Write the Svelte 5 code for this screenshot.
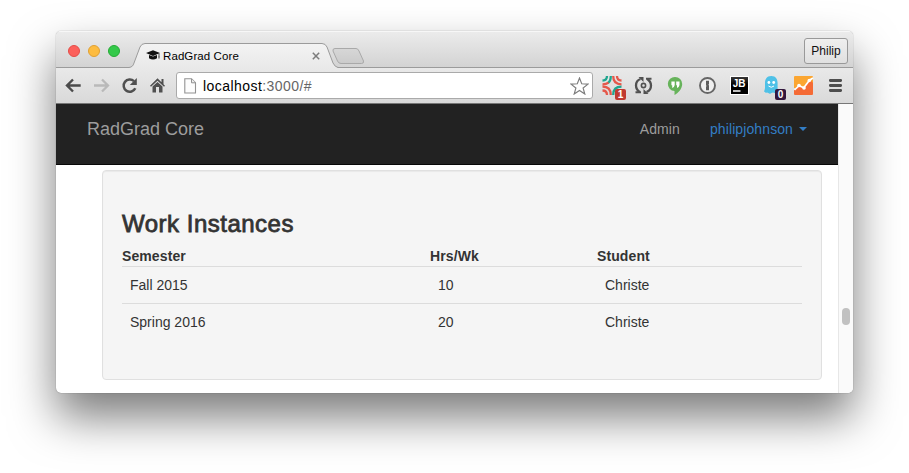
<script>
  const columns = ['Semester', 'Hrs/Wk', 'Student'];
  const rows = [
    ['Fall 2015', '10', 'Christe'],
    ['Spring 2016', '20', 'Christe']
  ];
</script>

<main class="desktop">
  <section class="window">
    <header class="titlebar">
      <div class="lights"><i class="red"></i><i class="amber"></i><i class="green"></i></div>
      <div class="tab">
        <svg class="shape" width="240" height="26" viewBox="0 0 240 26">
          <defs>
            <linearGradient id="tabfill" x2="0" y2="1"><stop stop-color="#f3f3f3" /><stop offset="1" stop-color="#e9e9e9" /></linearGradient>
            <linearGradient id="newfill" x2="0" y2="1"><stop stop-color="#d7d7d7" /><stop offset="1" stop-color="#cbcbcb" /></linearGradient>
          </defs>
          <path d="M0 25.5C3 25 4 24 5 21L11 5Q12.500 1.500 16 1.500H193Q196.500 1.500 198 5L204 21Q206 25 209 25.500V26H0Z" fill="url(#tabfill)" />
          <path d="M0 25.500C3 25 4 24 5 21L11 5Q12.500 1.500 16 1.500H193Q196.500 1.500 198 5L204 21Q206 25 209 25.500" fill="none" stroke="#9b9b9b" />
          <path d="M206 6.500H227Q229 6.500 230 9L234.500 19Q235 21.500 232.500 21.500H212Q209.500 21.500 208.500 19L204 9Q203.500 6.500 206 6.500Z" fill="url(#newfill)" stroke="#a9a9a9" />
        </svg>
        <svg class="cap" width="15" height="12" viewBox="0 0 15 12">
          <path d="M0 4 7 1.200 14 4 7 7ZM3 6 7 7.600 11 6V9.200Q7 11.800 3 9.200Z" fill="#111" />
          <path d="M13 4.500V8" stroke="#222" stroke-width=".8" /><path d="M12.400 7.500H13.600V9.500H12.400Z" fill="#555" />
        </svg>
        <span class="tabtitle">RadGrad Core</span>
        <svg class="close" width="8" height="8" viewBox="0 0 8 8"><path d="M.8 .8 7.200 7.200M7.200 .8 .8 7.200" stroke="#7c7c7c" stroke-width="1.500" /></svg>
      </div>
      <button class="profile">Philip</button>
    </header>

    <nav class="toolbar">
      <div class="controls">
        <svg width="28" height="35" viewBox="0 0 28 35"><path d="M20.700 17.500H7.500M13 11.500 7 17.500 13 23.500" fill="none" stroke="#4b4b4b" stroke-width="2.400" /></svg>
        <svg width="28" height="35" viewBox="0 0 28 35"><path d="M6 17.500H19.500M14 11.500 20 17.500 14 23.500" fill="none" stroke="#b9b9b9" stroke-width="2.300" /></svg>
        <svg width="28" height="35" viewBox="0 0 28 35"><path d="M19.300 20.200A6.100 6.100 0 1 1 18 13.200" fill="none" stroke="#505050" stroke-width="2.500" /><path d="M20.800 10V17H13.800Z" fill="#505050" /></svg>
        <svg width="28" height="35" viewBox="0 0 28 35"><path d="M6 17.800 13.500 10.200 17.500 14.200V11H19.500V16.200L21 17.800 20 18.800 13.500 12.800 7 18.800Z" fill="#505050" /><path d="M8.500 18.500 13.500 14 18.500 18.500V24.500H15V19H12V24.500H8.500Z" fill="#505050" /></svg>
      </div>
      <div class="address">
        <svg width="13" height="16" viewBox="0 0 13 16"><path d="M.8 .8H7.500L11.500 4.800V15H.8Z" fill="#fdfdfd" stroke="#929292" stroke-width="1.100" /><path d="M7.500 1V4.800H11.500" fill="#eee" stroke="#929292" /></svg>
        <span class="url">localhost<em>:3000/#</em></span>
        <svg class="star" width="19" height="18" viewBox="0 0 19 18"><path d="M9.500 1 11.700 6.800 18 7.100 13.100 11 14.800 17 9.500 13.500 4.200 17 5.900 11 1 7.100 7.300 6.800Z" fill="#fff" stroke="#7d7d7d" stroke-width="1.150" /></svg>
      </div>
      <div class="extensions">
        <div class="ext">
          <svg width="32" height="35" viewBox="0 0 32 35">
            <g fill="none" stroke-width="2.300">
              <path d="M11 8Q11 12.500 6.500 12.500M21 27Q21 22.500 25.500 22.500M17.200 27Q17.200 18.700 25.500 18.700M14.800 8Q14.800 13 12 15" stroke="#20a68f" />
              <path d="M12.500 14.600Q10.500 16.300 6.500 16.300M21 8Q21 12.500 25.500 12.500M17.200 8Q17.200 16.300 25.500 16.300M6.500 18.700Q14.800 18.700 14.800 27M6.500 22.500Q11 22.500 11 27" stroke="#e5584b" />
            </g>
          </svg><b class="badge tomato">1</b>
        </div>
        <svg width="32" height="35" viewBox="0 0 32 35"><g fill="none" stroke="#515151" stroke-width="2.300"><path d="M11.800 24Q8 21.500 8 17.500 8 12.500 12.500 11M19.200 11Q23 13.500 23 17.500 23 22.500 18.500 24" /><circle cx="15.500" cy="17.500" r="2.100" stroke-width="1.600" /></g><path d="M10.500 9H15.500V14ZM20.500 26H15.500V21ZM7.500 25.200V23.200H13V25.200ZM23.500 9.800V11.800H18V9.800Z" fill="#515151" /></svg>
        <svg width="32" height="35" viewBox="0 0 32 35"><path d="M15.200 9A7 7 0 0 1 22.200 16C22.200 21 18 25.200 14.500 27V23A7 7 0 0 1 15.200 9Z" fill="#67b35b" /><path d="M11.400 13.500H14.700V17Q14.300 19.300 12.200 20V17.300H11.400ZM16.200 13.500H19.500V17Q19.100 19.300 17 20V17.300H16.200Z" fill="#fff" /></svg>
        <svg width="32" height="35" viewBox="0 0 32 35"><circle cx="15.500" cy="17.500" r="7.500" fill="#efefef" stroke="#666" stroke-width="1.900" /><path d="M14 12.800H17V16L16.400 16.800 17 17.500V22.200H14V18.800L14.600 18 14 17.300Z" fill="#5b5b5b" /></svg>
        <svg width="32" height="35" viewBox="0 0 32 35"><defs><linearGradient id="jb" x2="0" y2="1"><stop stop-color="#3b3b3b" /><stop offset=".45" stop-color="#000" /></linearGradient></defs><rect x="6.500" y="8.500" width="18" height="18" fill="url(#jb)" stroke="#fff" /><text x="8.700" y="18.800" class="jb">JB</text><path d="M9 23H16.500" stroke="#fff" stroke-width="1.400" /></svg>
        <div class="ext">
          <svg width="32" height="35" viewBox="0 0 32 35"><path d="M15.300 8C10.500 8 9 11.500 9 15V20Q8.800 22 7.900 23.500 9.500 23.700 9.700 25 11 23.800 12.300 25 14 26.500 15.400 25 17 23.800 18.500 25 20 26.200 20.500 24.500 21.500 24.500 22.500 24 21.600 22 21.600 20V15C21.600 11.500 20 8 15.300 8Z" fill="#4fc1e7" /><g fill="#fff"><circle cx="12.900" cy="14.500" r="1.400" /><circle cx="17.700" cy="14.500" r="1.400" /></g><path d="M12.500 18Q15.300 20.500 18 18" fill="none" stroke="#fff" /></svg><b class="badge plum">0</b>
        </div>
        <svg width="32" height="35" viewBox="0 0 32 35"><path d="M6 9Q6 8 7 8H24Q25 8 25 9V20H6Z" fill="#fba632" /><path d="M6 22 10.500 17 15.500 19.500 21.500 11 25 15V26Q25 27 24 27H7Q6 27 6 26Z" fill="#f56b36" /><path d="M6.500 22 11 17.700 15.800 19.700 21.500 12.200 25 10" fill="none" stroke="#fff" stroke-width="1.700" /><g fill="#fff"><circle cx="11" cy="17.500" r="1.800" /><circle cx="16" cy="20" r="1.800" /><circle cx="21.300" cy="12.500" r="1.800" /></g></svg>
        <svg width="32" height="35" viewBox="0 0 32 35"><path d="M10.300 12.500H20.700M10.300 17.500H20.700M10.300 22.500H20.700" stroke="#4e4e4e" stroke-width="2.800" stroke-linecap="round" /></svg>
      </div>
    </nav>

    <div class="viewport">
      <div class="page">
        <div class="navbar">
          <span class="brand">RadGrad Core</span>
          <span class="admin">Admin</span>
          <span class="user">philipjohnson<i></i></span>
        </div>
        <article class="well">
          <h3>Work Instances</h3>
          <table>
            <thead><tr>{#each columns as column}<th>{column}</th>{/each}</tr></thead>
            <tbody>{#each rows as row}<tr>{#each row as cell}<td>{cell}</td>{/each}</tr>{/each}</tbody>
          </table>
        </article>
      </div>
      <div class="scrollbar"><div class="thumb"></div></div>
    </div>
  </section>
</main>

<style>
  :global(body) { margin: 0; background: #fff; }
  * { box-sizing: border-box; }
  svg { display: block; flex: none; }
  .desktop { width: 909px; height: 473px; padding: 31px 56px 80px; overflow: hidden; font-family: "Liberation Sans", Arial, sans-serif; }
  .window { width: 797px; height: 362px; border-radius: 5px; box-shadow: 0 0 1px rgba(0,0,0,.55), 0 24px 46px rgba(0,0,0,.52); display: flex; flex-direction: column; overflow: hidden; background: #fff; }
  .titlebar { height: 37px; flex: none; display: flex; background: linear-gradient(#ececec, #d3d3d3); border-bottom: 1px solid #9b9b9b; box-shadow: inset 0 1px #f7f7f7; }
  .lights { display: flex; gap: 8px; padding: 14px 0 0 12px; width: 73px; }
  .lights i { width: 12px; height: 12px; border-radius: 50%; flex: none; }
  .red { background: #fc605b; border: 1px solid #e44c47; }
  .amber { background: #fdbc40; border: 1px solid #e0a033; }
  .green { background: #34c94a; border: 1px solid #25ab35; }
  .tab { position: relative; width: 240px; height: 26px; margin-top: 11px; display: flex; align-items: center; padding-left: 17px; }
  .shape { position: absolute; left: 0; top: 0; }
  .cap, .tabtitle, .close { position: relative; }
  .tabtitle { font-size: 11.500px; line-height: 14px; margin: 2px 0 0 2px; width: 77px; letter-spacing: .09px; white-space: nowrap; color: #000; }
  .close { margin: 2px 0 0 72px; }
  .profile { width: 44px; height: 26px; margin: 7px 5px 0 auto; padding: 0; border: 1px solid #999; border-radius: 3px; background: linear-gradient(#efefef, #e0e0e0); font: 12px "Liberation Sans", Arial, sans-serif; color: #111; }
  .toolbar { height: 36px; flex: none; display: flex; padding-left: 4px; background: linear-gradient(#e9e9e9, #d9d9d9); border-bottom: 1px solid #777; }
  .controls, .extensions { display: flex; }
  .address { width: 417px; height: 27px; margin: 4px 3px 0 4px; padding: 0 3px 0 7px; display: flex; align-items: center; border: 1px solid #aaa; border-radius: 3px; background: #fff; }
  .url { margin-left: 6px; font-size: 14px; line-height: 18px; letter-spacing: .44px; color: #000; }
  .url em { color: #666; font-style: normal; }
  .star { margin-left: auto; }
  .ext { position: relative; width: 32px; height: 35px; }
  .badge { position: absolute; left: 19px; top: 21px; width: 11px; height: 11px; border-radius: 2px; font-size: 10px; line-height: 11px; text-align: center; color: #fff; }
  .tomato { background: #c03b31; }
  .plum { background: #33173d; }
  .jb { font: bold 10px "Liberation Sans", Arial, sans-serif; fill: #fff; }
  .viewport { flex: 1; display: flex; min-height: 0; }
  .page { width: 782px; }
  .navbar { height: 61px; background: #222; border-bottom: 1px solid #080808; display: flex; padding: 15px 31px 0; color: #9d9d9d; font-size: 14px; line-height: 20px; }
  .brand { font-size: 18px; }
  .admin { margin-left: auto; margin-right: 30px; letter-spacing: .1px; }
  .user { color: #337ec5; display: flex; align-items: center; height: 20px; letter-spacing: .1px; }
  .user i { margin-left: 6px; border: 4px solid transparent; border-top-color: #337ec5; border-bottom: 0; }
  .well { width: 720px; height: 210px; margin: 5px 0 0 46px; padding: 39px 19px 0; border: 1px solid #e0e0e0; border-radius: 4px; background: #f5f5f5; box-shadow: inset 0 1px 1px rgba(0,0,0,.05); color: #333; }
  h3 { margin: 0; font-size: 24px; line-height: 28px; font-weight: 500; letter-spacing: .5px; -webkit-text-stroke: .8px #333; }
  table { width: 680px; margin-top: 8px; border-collapse: collapse; table-layout: fixed; font-size: 14px; line-height: 20px; }
  th { padding: 0; text-align: left; height: 20px; letter-spacing: .1px; }
  th:first-child { width: 308px; }
  th:nth-child(2) { width: 167px; }
  td { height: 37px; padding: 8px; border-top: 1px solid #dcdcdc; }
  .scrollbar { width: 15px; border-left: 1px solid #e7e7e7; background: #fafafa; padding: 204px 0 0 3px; }
  .thumb { width: 8px; height: 17px; border-radius: 4px; background: #c1c1c1; }
</style>
